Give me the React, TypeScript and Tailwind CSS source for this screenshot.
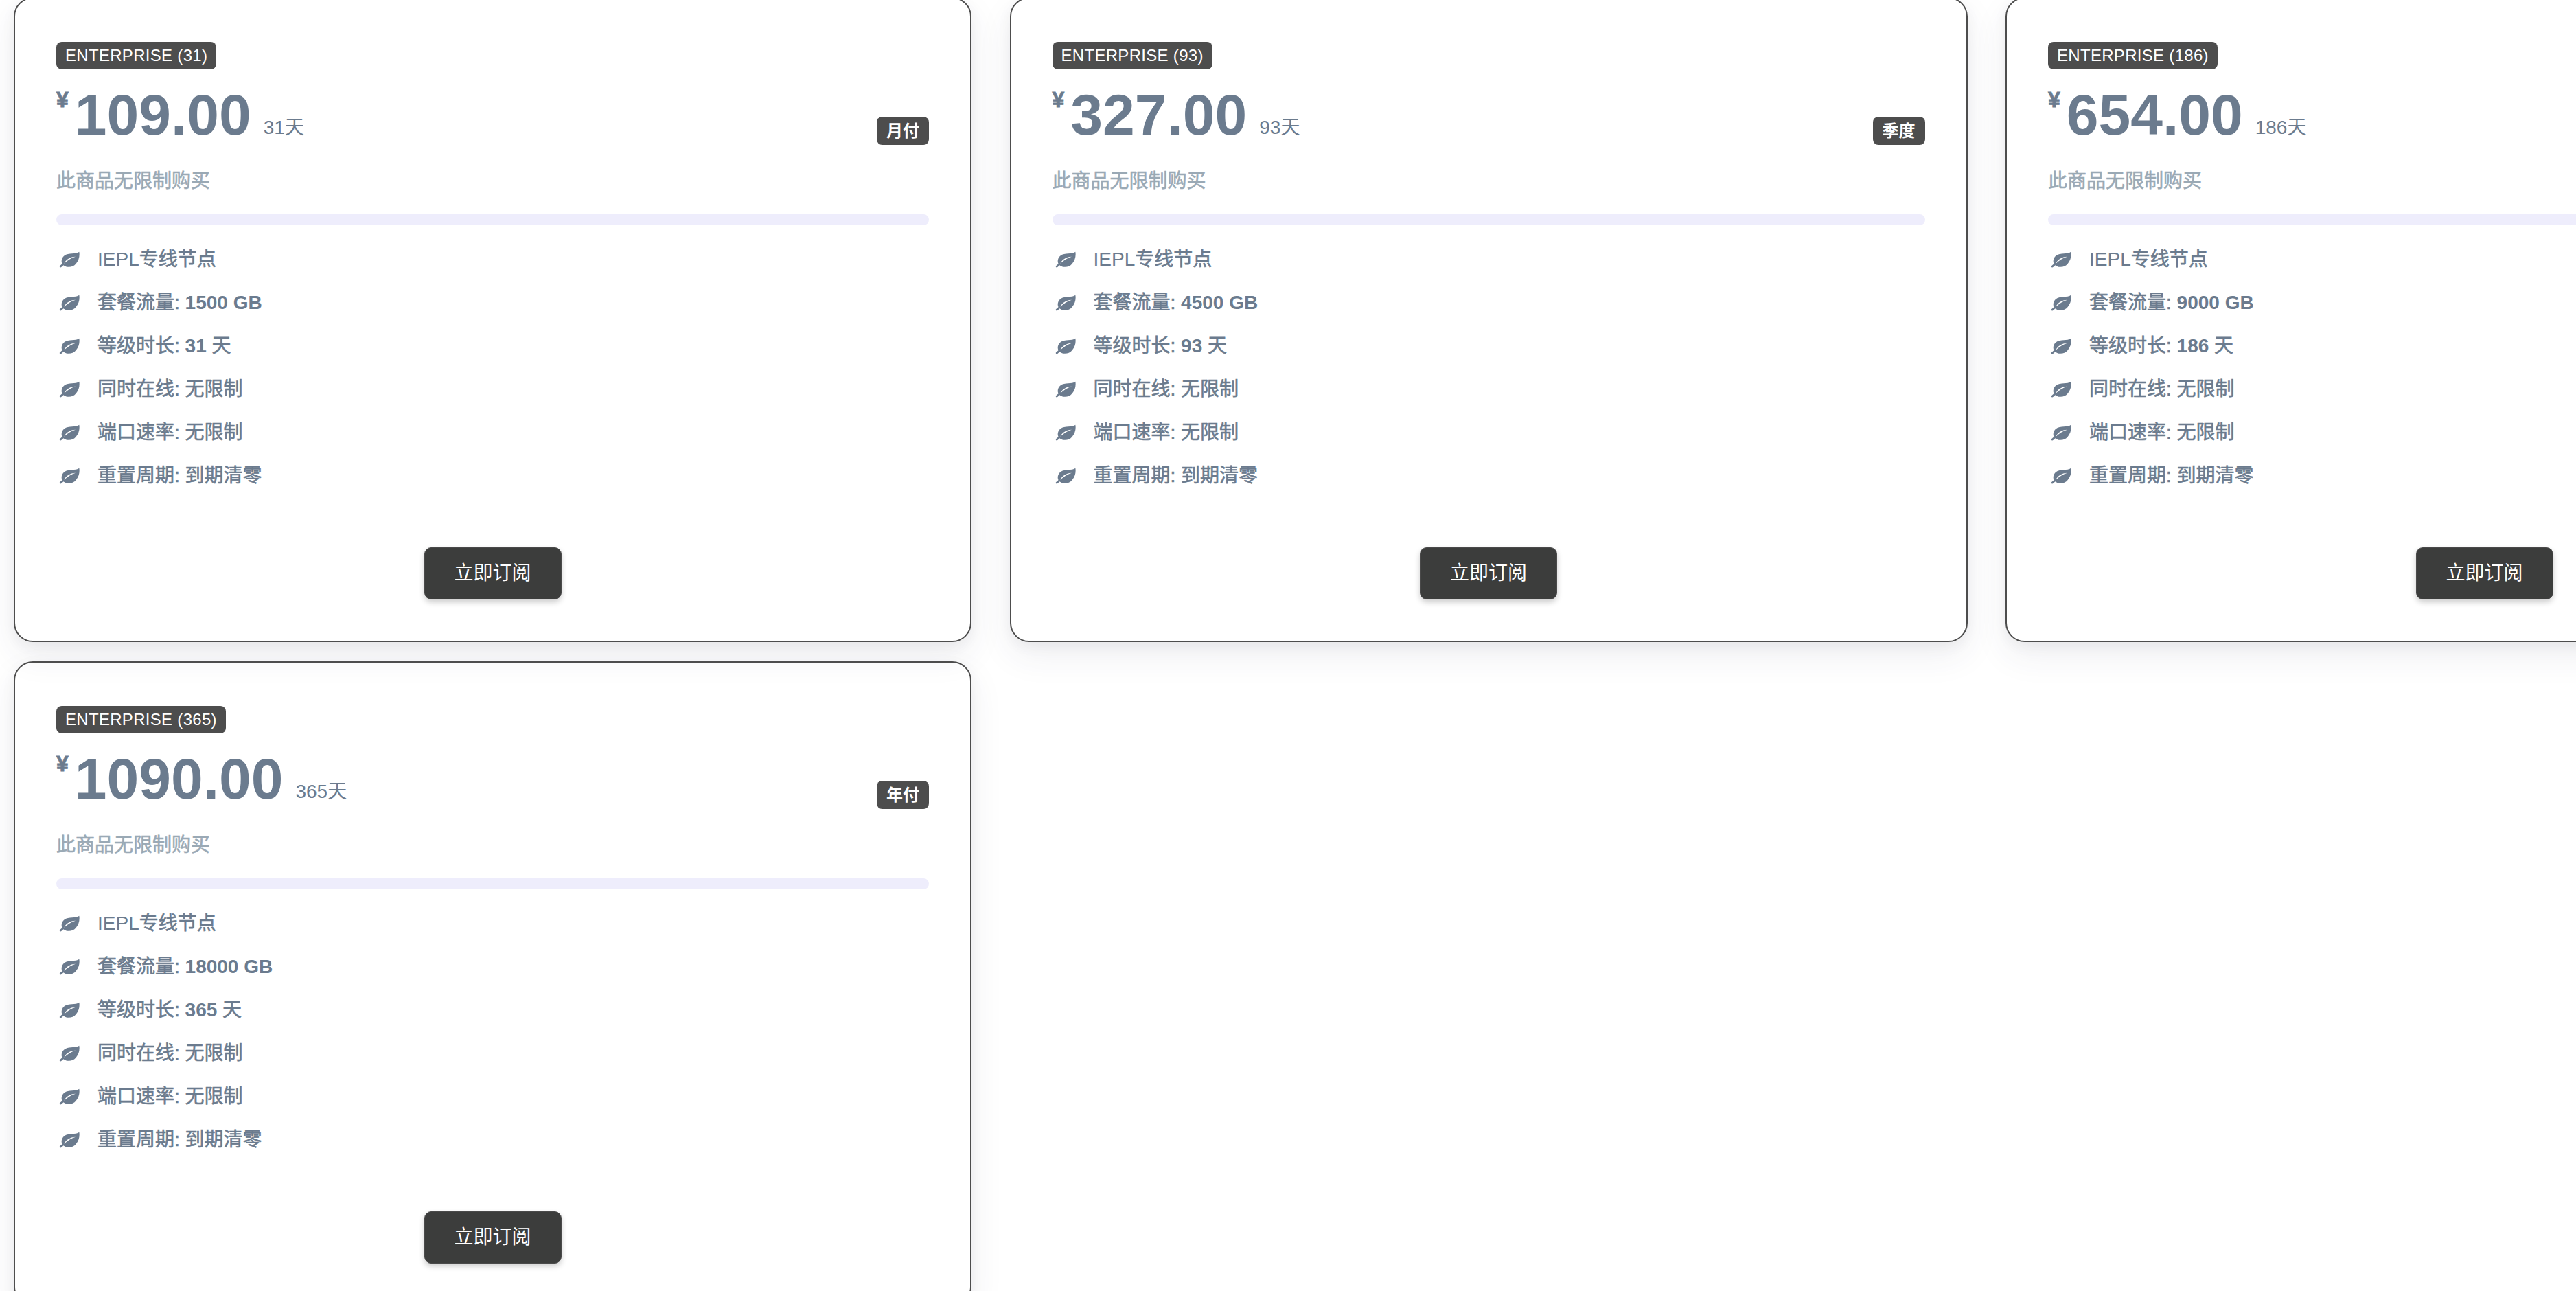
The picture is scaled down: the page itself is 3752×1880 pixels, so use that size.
const plans = [
  { days: 31, price: '109.00', traffic: '1500 GB', period: '月付' },
  { days: 93, price: '327.00', traffic: '4500 GB', period: '季度' },
  { days: 186, price: '654.00', traffic: '9000 GB', period: '半年' },
  { days: 365, price: '1090.00', traffic: '18000 GB', period: '年付' },
];

// regular CJK weight is too light next to the bold latin, thicken a little
const medium = '[-webkit-text-stroke:0.6px_#6b7b8e]';

const LeafIcon = () => (
  <svg viewBox="80 78 90 70" className="w-[30px] h-[24px] ml-[4px] mr-[26px] shrink-0">
    <path
      d="M168 79C152 92 122 80 103 96C90 107 88 123 95 133C106 149 138 151 154 131C167 115 171 97 168 79Z"
      fill="#6b7b8e"
    />
    <path d="M87 143L104 128" stroke="#6b7b8e" strokeWidth="9" strokeLinecap="round" />
    <path d="M102 130C110 112 128 101 152 100C132 106 118 116 102 130Z" fill="#fff" />
  </svg>
);

const Feature = ({ children }: { children: React.ReactNode }) => (
  <li className="flex items-center h-[63px]">
    <LeafIcon />
    <span className="text-[28px] text-[#6b7b8e]">{children}</span>
  </li>
);

const PlanCard = ({ plan }: { plan: (typeof plans)[number] }) => (
  <div className="h-[939px] border-2 border-[#4d4d4d] rounded-[28px] px-[60px] pt-[63px] shadow-[0_20px_50px_rgba(50,50,93,0.08),0_6px_20px_rgba(0,0,0,0.05)]">
    <div className="flex justify-between items-end h-[190px]">
      <div className="self-start">
        <span className="inline-flex items-center h-[40px] px-[13px] rounded-[8px] bg-[#4d4d4d] text-white text-[24px] tracking-[0.3px]">
          ENTERPRISE ({plan.days})
        </span>
        <div className="flex items-start text-[#6b7b8e] h-[88px] mt-[26px]">
          <span className="text-[32px] font-bold leading-[32px] mt-[2px] mr-[9px] [-webkit-text-stroke:0.8px_#6b7b8e]">¥</span>
          <span className="text-[84px] font-bold leading-[88px] -mt-[4px]">{plan.price}</span>
          <span className="text-[28px] ml-[18px] mt-[38px]">{plan.days}天</span>
        </div>
      </div>
      <span className="inline-flex items-center h-[41px] px-[14px] mb-[40px] rounded-[8px] bg-[#4d4d4d] text-white text-[24px] font-bold">
        {plan.period}
      </span>
    </div>
    <p className="text-[28px] text-[#9aa9b5] leading-[40px] -mt-[7px] [-webkit-text-stroke:0.6px_#9aa9b5]">此商品无限制购买</p>
    <div className="h-[16px] mt-[28px] mb-[18px] rounded-[8px] bg-[#eeedfc]" />
    <ul>
      <Feature>
        IEPL<span className={medium}>专线节点</span>
      </Feature>
      <Feature>
        <span className={medium}>套餐流量: </span>
        <b>{plan.traffic}</b>
      </Feature>
      <Feature>
        <span className={medium}>等级时长: </span>
        <b>{plan.days}</b> <span className={medium}>天</span>
      </Feature>
      <Feature>
        <span className={medium}>同时在线: 无限制</span>
      </Feature>
      <Feature>
        <span className={medium}>端口速率: 无限制</span>
      </Feature>
      <Feature>
        <span className={medium}>重置周期: 到期清零</span>
      </Feature>
    </ul>
    <div className="flex justify-center mt-[73px]">
      <button className="w-[200px] h-[76px] rounded-[10px] bg-[#3c3d3c] border border-[#4a4a4a] text-white text-[28px] shadow-[0_4px_8px_rgba(0,0,0,0.2)]">
        立即订阅
      </button>
    </div>
  </div>
);

export default function App() {
  return (
    <div className="w-[3752px] h-[1880px] overflow-hidden bg-white font-['Liberation_Sans','Noto_Sans_CJK_SC',sans-serif]">
      <div className="-mt-[4px] ml-[20px] grid grid-cols-[repeat(3,1395px)] gap-x-[55.5px] gap-y-[28px] w-[4400px]">
        {plans.map((p) => (
          <PlanCard key={p.days} plan={p} />
        ))}
      </div>
    </div>
  );
}
